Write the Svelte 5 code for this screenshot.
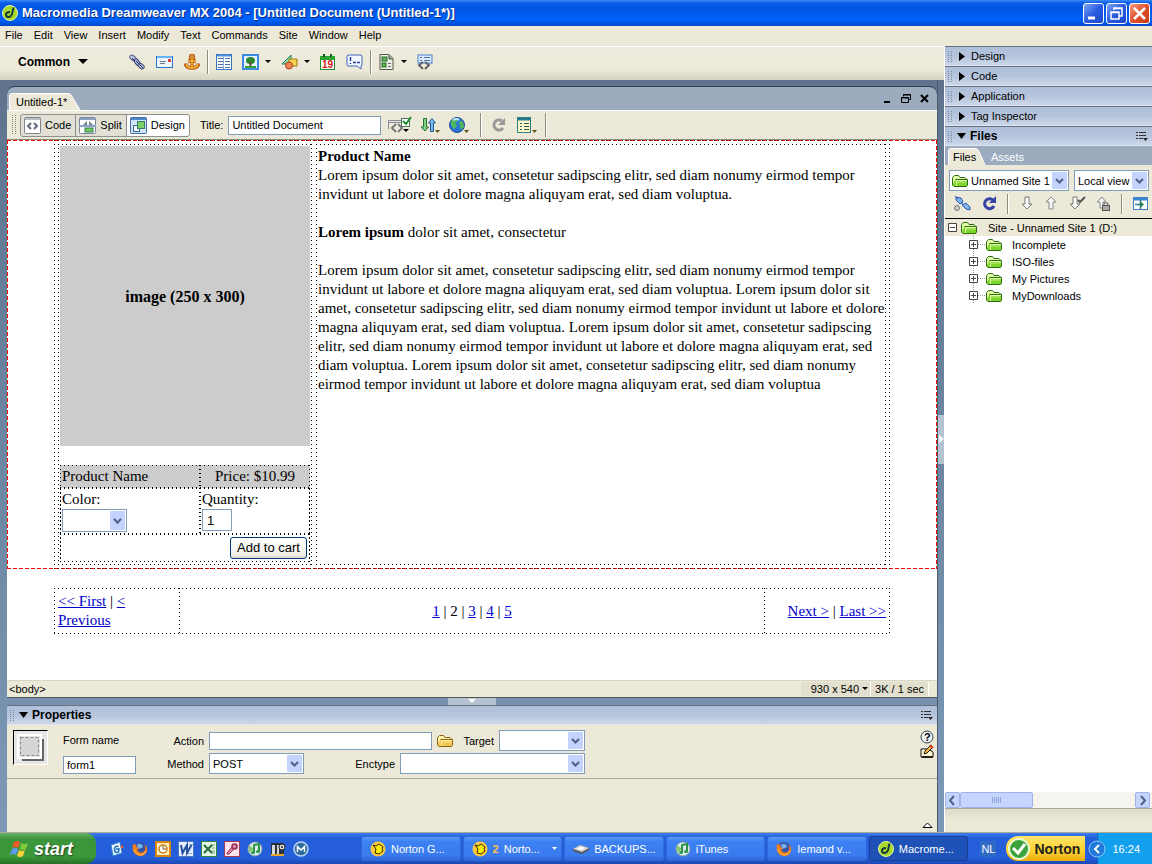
<script lang="ts">
	let docTitle = $state('Untitled Document');
	let formName = $state('form1');
	let action = $state('');
	let quantity = $state('1');
	let view = $state('Design');

	const menus = ['File', 'Edit', 'View', 'Insert', 'Modify', 'Text', 'Commands', 'Site', 'Window', 'Help'];
	const panels = ['Design', 'Code', 'Application', 'Tag Inspector'];
	const views = ['Code', 'Split', 'Design'];
	const folders = ['Incomplete', 'ISO-files', 'My Pictures', 'MyDownloads'];
	const quickLaunch = ['desktop', 'firefox', 'outlook', 'word', 'excel', 'access', 'itunes', 'video', 'mx'];
	const tasks = [
		{ icon: 'norton', label: 'Norton G...' },
		{ icon: 'norton', label: 'Norto...', count: 2 },
		{ icon: 'drive', label: 'BACKUPS...' },
		{ icon: 'itunes', label: 'iTunes' },
		{ icon: 'firefox', label: 'Iemand v...' },
		{ icon: 'dreamweaver', label: 'Macrome...', active: true }
	];
</script>

{#snippet caret()}
	<svg class="caret" width="6" height="4" viewBox="0 0 6 4"><path d="M0 0h6L3 3z" fill="#000" /></svg>
{/snippet}

{#snippet chevron()}
	<svg class="chevron" viewBox="0 0 15 17" preserveAspectRatio="none">
		<rect width="15" height="17" rx="1" fill="#c3d3fd" />
		<path d="M4 7l3.500 3.500L11 7" fill="none" stroke="#4d6185" stroke-width="2" />
	</svg>
{/snippet}

{#snippet grip()}
	<svg class="grip" width="5" height="11" viewBox="0 0 5 11">
		<path d="M.5 0v11M3.500 0v11" stroke="#7d8798" stroke-dasharray="1 1" />
	</svg>
{/snippet}

{#snippet optionsMenu()}
	<svg width="12" height="10" viewBox="0 0 12 10">
		<path d="M0 1.500h2M0 4.500h2M0 7.500h2M3 1.500h7M3 4.500h7M3 7.500h4" stroke="#333" />
		<path d="M7 7h5L9.500 10z" fill="#222" />
	</svg>
{/snippet}

{#snippet folder(fill, edge, shine)}
	<svg width="17" height="14" viewBox="0 0 17 14">
		<path d="M.5 11V3.500l2-2h4l1.500 2h5l1 1V7" fill={shine} stroke={edge} />
		<path d="M3.500 5.500h12V11l-1 1.500H2L.5 11" fill={fill} stroke={edge} />
		<path d="M4.500 12V6.500H15" fill="none" stroke={shine} />
		<path d="M5 8h9.500" stroke={shine} stroke-opacity=".3" stroke-width="2" />
	</svg>
{/snippet}

{#snippet appIcon(name)}
	<svg width="16" height="16" viewBox="0 0 16 16">
		{#if name === 'desktop'}
			<path d="M2 4l9-3 2 11-9 3z" fill="#eaf5ff" stroke="#2e84cb" />
			<path d="M9.500 5.500q-4-1-4 3t4 2.500L10 8H7" fill="none" stroke="#176fbd" stroke-width="1.500" />
			<path d="M12 4l3 2-3 2z" fill="#f2562a" />
		{:else if name === 'firefox'}
			<circle cx="8" cy="8" r="7" fill="#3455a9" />
			<path d="M6 3q4-1 5 3L7 8 5 5z" fill="#72b6ed" />
			<path d="M1 3q2 1 3 0 0 4 3 4-3 2 0 4 4 2 6-2 1-3-1-6 4 3 3 7-2 6-8 5Q-1 13 1 3z" fill="#f47a1d" />
			<path d="M2 8q1 5 6 6 4 0 6-4" fill="none" stroke="#ffc643" />
		{:else if name === 'outlook'}
			<rect x="1" y="1" width="14" height="14" fill="#fff0bd" stroke="#d9860e" stroke-width="2" />
			<circle cx="8" cy="8" r="4" fill="#fff" stroke="#cb7d13" stroke-width="1.500" />
			<path d="M8 5v3h3" fill="none" stroke="#8e5710" />
		{:else if name === 'word'}
			<rect x=".5" y=".5" width="15" height="15" fill="#e5efff" stroke="#4e78bd" />
			<path d="M9 12.500h5M11 3.500h4" stroke="#8dafd8" />
			<path d="M3 4l1.500 8L9 4v8l4.500-8" fill="none" stroke="#25529e" stroke-width="2" />
		{:else if name === 'excel'}
			<rect x=".5" y=".5" width="15" height="15" fill="#e6f5e6" stroke="#308541" />
			<path d="M10 4h4M11 7h3M11 10h3M10 12h4" stroke="#77af7c" />
			<path d="M3 4l8 8M11 4l-8 8" stroke="#236e35" stroke-width="2" />
		{:else if name === 'access'}
			<rect x=".5" y=".5" width="15" height="15" fill="#fae3eb" stroke="#a23b5c" />
			<path d="M8 6l-5 6v1h2l5-5" fill="#d8889f" stroke="#9c2e51" />
			<circle cx="10.500" cy="5.500" r="2.500" fill="#d8889f" stroke="#9c2e51" stroke-width="1.500" />
		{:else if name === 'itunes'}
			<circle cx="8" cy="8" r="7" fill="#dae9ed" stroke="#829eab" />
			<path d="M2 4l5 4-5 4z" fill="#87c46f" />
			<path d="M7 11V4l5-1v7" fill="none" stroke="#299346" stroke-width="2" />
			<ellipse cx="6" cy="11.500" rx="2" ry="1.500" fill="#299346" />
			<ellipse cx="11" cy="10.500" rx="2" ry="1.500" fill="#299346" />
		{:else if name === 'video'}
			<rect x="1" y="2" width="13" height="12" fill="#27313f" />
			<path d="M2 4h3v9H2zM7 4h2v9H7z" fill="#d4d6d8" />
			<circle cx="12" cy="6" r="3" fill="#dedede" stroke="#222" />
			<circle cx="12" cy="6" r="1" fill="#222" />
			<path d="M1 14h13" stroke="#eba72c" stroke-width="2" />
		{:else if name === 'mx'}
			<circle cx="8" cy="8" r="7" fill="#2f6c9e" stroke="#b9d6ec" stroke-width="1.500" />
			<path d="M4.500 11V5.500L8 9l3.500-3.500V11" fill="none" stroke="#fff" stroke-width="1.500" />
		{:else if name === 'norton'}
			<circle cx="8" cy="8" r="7.500" fill="#ffc93b" />
			<path d="M3 4l3 1 3-2 4 3-1 2 1 2-4 3-4-1 1-4z" fill="#ffee00" stroke="#302900" stroke-linejoin="round" />
		{:else if name === 'drive'}
			<path d="M0 8l7-4 9 3v2l-7 4-9-3z" fill="#555" />
			<path d="M0 8l7-4 9 3-7 4z" fill="#d4d4d4" />
			<path d="M4 7.500l4-2 4 1.500-4 2z" fill="#fff" />
		{:else}
			<circle cx="8" cy="8" r="7.500" fill="#a8d82a" stroke="#e1f69d" />
			<path d="M11.500 2.500L10 9q-1 3-3.500 3T4 9.500 8 7" fill="none" stroke="#173a3a" stroke-width="2" />
		{/if}
	</svg>
{/snippet}

<div class="app">
	<header class="titlebar">
		{@render appIcon('dreamweaver')}
		<h1>Macromedia Dreamweaver MX 2004 - [Untitled Document (Untitled-1*)]</h1>
		<div class="window-buttons">
			<button aria-label="Minimize"><svg viewBox="0 0 19 19"><path d="M4 14h7" stroke="#fff" stroke-width="3" /></svg></button>
			<button aria-label="Restore"><svg viewBox="0 0 19 19"><path d="M7 6V4h8v8h-3M4 8h8v7H4zM4 8.500h8M7 4.500h8" fill="none" stroke="#fff" stroke-width="1.500" /></svg></button>
			<button class="close" aria-label="Close"><svg viewBox="0 0 19 19"><path d="M4 4l11 11M15 4L4 15" stroke="#fff" stroke-width="2.500" /></svg></button>
		</div>
	</header>

	<nav class="menubar">
		{#each menus as menu}
			<button>{menu}</button>
		{/each}
	</nav>

	<div class="main">
		<div class="left">
			<div class="insert-bar">
				<button class="category">Common <svg width="10" height="6" viewBox="0 0 10 6"><path d="M0 0h10L5 5z" /></svg></button>
				<div class="tools links">
					<button aria-label="Hyperlink">
						<svg width="16" height="16" viewBox="0 0 16 16" fill="none">
							<rect x="-3.500" y="-2" width="7" height="4" rx="2" transform="translate(4 4) rotate(40)" fill="#c7d0ee" stroke="#4d5b86" />
							<rect x="-3.500" y="-2" width="7" height="4" rx="2" transform="translate(12 12) rotate(40)" fill="#c7d0ee" stroke="#38466f" />
							<rect x="-3.500" y="-2" width="7" height="4" rx="2" transform="translate(8 8) rotate(55)" fill="#aab6e0" stroke="#38466f" />
							<path d="M3 4l3 3M7 7l3 3M11 11l3 3" stroke="#26315a" />
						</svg>
					</button>
					<button aria-label="Email link">
						<svg width="17" height="16" viewBox="0 0 17 16"><rect x=".5" y="2.500" width="16" height="11" fill="#edf5ff" stroke="#2876d2" /><path d="M1 3h15" stroke="#65b3f1" stroke-width="2" /><path d="M4 7.500h6M4 9.500h5" stroke="#6c788c" /><path d="M12 5h3v3h-3z" fill="#d9432b" /></svg>
					</button>
					<button aria-label="Named anchor">
						<svg width="16" height="16" viewBox="0 0 16 16" fill="none"><path d="M8 5v9M4 7h8M1.500 9.500Q2 14 8 14t6.500-4.500" stroke="#b4520c" stroke-width="3.500" /><circle cx="8" cy="3" r="2" stroke="#b4520c" stroke-width="2.500" /><circle cx="8" cy="3" r="2" stroke="#f5a436" /><path d="M8 5v9M4 7h8M2 10q1 4 6 4t6-4" stroke="#ffb53c" stroke-width="1.500" /></svg>
					</button>
				</div>
				<span class="sep"></span>
				<div class="tools">
					<button aria-label="Table">
						<svg width="16" height="16" viewBox="0 0 16 16"><rect x=".5" y=".5" width="15" height="15" fill="#fff" stroke="#3273c2" /><path d="M1 1.500h14" stroke="#4d8ed9" stroke-width="2" /><path d="M2 4.500h5M9 4.500h5M2 7.500h5M9 7.500h5M2 10.500h5M9 10.500h5M2 13.500h5M9 13.500h5" stroke="#4a6fa5" /><path d="M7.500 3v12" stroke="#8daed4" /></svg>
					</button>
					<button aria-label="Image">
						<svg width="17" height="16" viewBox="0 0 17 16"><rect x="1" y="1" width="15" height="14" fill="#e4f3ff" stroke="#3c8be0" stroke-width="2" /><ellipse cx="8.500" cy="6.500" rx="4.500" ry="3.500" fill="#2b872c" /><path d="M7.500 8h2v4h-2z" fill="#674326" /><path d="M3 12h11v2H3z" fill="#36a035" /></svg>
						{@render caret()}
					</button>
					<button aria-label="Media">
						<svg width="17" height="16" viewBox="0 0 17 16"><path d="M1 10L10 1v9z" fill="#8fdcae" stroke="#247a60" /><path d="M8 5h8v7H8z" fill="#f6d252" stroke="#9a7b16" /><circle cx="8" cy="11.500" r="3.500" fill="#f08351" stroke="#aa401f" /></svg>
						{@render caret()}
					</button>
					<button aria-label="Date">
						<svg width="16" height="16" viewBox="0 0 16 16"><rect x=".5" y="2.500" width="14" height="13" fill="#fff" stroke="#218a31" /><path d="M0 2h15v4H0z" fill="#28a52f" /><path d="M4 0v3M11 0v3" stroke="#155b1c" stroke-width="2" /><text x="2" y="14" font-size="10" font-weight="bold" fill="#d21515">19</text></svg>
					</button>
					<button aria-label="Comment">
						<svg width="17" height="16" viewBox="0 0 17 16"><path d="M2 1h13l1 1v9l-1 1v3l-4-3H2l-1-1V2z" fill="#f4f8ff" stroke="#4164b8" /><path d="M4.500 3v4M4.500 9v1M7 8.500h3M11 8.500h3" stroke="#223e9c" stroke-width="1.500" /></svg>
					</button>
				</div>
				<span class="sep"></span>
				<div class="tools">
					<button aria-label="Templates">
						<svg width="16" height="16" viewBox="0 0 16 16"><path d="M1 .5h9l4 4v11H1z" fill="#eef1e6" stroke="#50594b" /><path d="M10 1v4h4" fill="#9ba299" stroke="#50594b" /><rect x="3" y="3" width="5" height="4" fill="#64b451" stroke="#236c2e" /><rect x="3" y="9" width="4" height="4" fill="#64b451" stroke="#236c2e" /><path d="M9 9.500h3M9 12.500h3" stroke="#667" /></svg>
						{@render caret()}
					</button>
					<button aria-label="Tag chooser">
						<svg width="16" height="16" viewBox="0 0 16 16"><rect x="1" y="1" width="14" height="8" fill="#dcecff" stroke="#4a7ec7" /><path d="M3 3.500h2M7 3.500h6M3 6.500h2M7 6.500h6" stroke="#56759c" /><path d="M6 8l-4 3 4 4M8 8l4 3-4 4" fill="none" stroke="#5f6265" stroke-width="2" /></svg>
					</button>
				</div>
			</div>

			<div class="workspace">
				<div class="stack">
					<section class="document">
						<div class="doc-head">
							<svg class="tab" width="72" height="17" viewBox="0 0 72 17"><path d="M.5 17V3Q.5.500 3 .5h56q3 0 4 3L71 17" fill="#ece9d8" stroke="#fff" /><text x="7" y="13">Untitled-1*</text></svg>
							<div class="doc-buttons">
								<button aria-label="Minimize document"><svg width="9" height="9" viewBox="0 0 9 9"><path d="M1 8h6" stroke="#000" stroke-width="2" /></svg></button>
								<button aria-label="Restore document"><svg width="10" height="9" viewBox="0 0 10 9"><path d="M2.500 2.500V.5h7v5h-2M.5 3.500h7v5h-7zM.5 4h7M2 1h7" fill="none" stroke="#000" /></svg></button>
								<button aria-label="Close document"><svg width="9" height="9" viewBox="0 0 9 9"><path d="M1 1l7 7M8 1L1 8" stroke="#000" stroke-width="2" /></svg></button>
							</div>
						</div>

						<div class="doc-toolbar">
							<svg width="5" height="20" viewBox="0 0 5 20"><path d="M.5 0v20M3.500 0v20" stroke="#8d8a7b" stroke-dasharray="1 1" /></svg>
							<div class="views">
								{#each views as name}
									<button class:selected={view === name} onclick={() => (view = name)}>
										<svg width="17" height="17" viewBox="0 0 17 17">
											<rect x=".5" y=".5" width="16" height="16" rx="1" fill="#fff" stroke="#7c8591" />
											{#if name === 'Code'}
												<path d="M1 2h15" stroke="#b8bec8" stroke-width="2" />
												<path d="M7 6L4 9l3 3M10 6l3 3-3 3" fill="none" stroke="#606b78" stroke-width="2" />
											{:else if name === 'Split'}
												<path d="M1 2h15M0 9h17" stroke="#8aa3c8" stroke-width="2" />
												<path d="M8 4L4 8h4zM10 4l4 4h-4z" fill="#747e8b" />
												<rect x="6" y="11" width="8" height="4" fill="#73cb5c" stroke="#2f7e5b" />
											{:else}
												<rect x=".5" y=".5" width="16" height="16" rx="1" fill="#cfe3f9" stroke="#3e6ca7" />
												<path d="M1 2h15" stroke="#4f86c8" stroke-width="2" />
												<rect x="3.500" y="8.500" width="6" height="6" fill="#eff6ff" stroke="#366c92" />
												<rect x="7.500" y="4.500" width="7" height="7" fill="#7bd06b" stroke="#357d64" />
											{/if}
										</svg>
										{name}
									</button>
								{/each}
							</div>
							<label for="doc-title">Title:</label>
							<input id="doc-title" bind:value={docTitle} />
							<div class="doc-tools">
								<button aria-label="Check browser support"><svg width="24" height="18" viewBox="0 0 24 18"><path d="M.5 13V4.500H14M0 6.500h13" fill="none" stroke="#858b98" /><path d="M8 8l-4 4 4 4M10 8l4 4-4 4" fill="none" stroke="#777b81" stroke-width="2" /><rect x="13.500" y="2.500" width="8" height="8" fill="#fff" stroke="#51705a" /><path d="M15 5l3 3 5-7" fill="none" stroke="#1b8f32" stroke-width="2" /><path d="M15 13h6l-3 3z" /></svg></button>
								<button aria-label="File management"><svg width="21" height="17" viewBox="0 0 21 17"><path d="M3.500 1.500h3V10h2l-3.500 4L1 10h2.500z" fill="#80d080" stroke="#277438" /><path d="M10.500 14.500V6H8.500L12 1.500 15.500 6h-2v8.500z" fill="#75b7ef" stroke="#275992" /><path d="M15 13h5l-2.500 3z" fill="#5b5417" /></svg></button>
								<button aria-label="Preview in browser"><svg width="21" height="17" viewBox="0 0 21 17"><circle cx="8" cy="8" r="7.500" fill="#2b76d5" stroke="#214b93" /><path d="M2 4q4-4 7-2l-1 3-2 1 2 3-3 3-3-4zM10 4l4 1 1 5-3 3-1-4z" fill="#50b957" /><path d="M4 3q4-2 6 0" fill="none" stroke="#b9e6ff" stroke-width="2" /><path d="M15 13h5l-2.500 3z" fill="#5b5417" /></svg></button>
							</div>
							<span class="sep"></span>
							<button aria-label="Refresh"><svg width="14" height="16" viewBox="0 0 14 16"><path d="M11 4A5 5 0 1 0 12 11" fill="none" stroke="#99999b" stroke-width="3" /><path d="M14 1v7H7z" fill="#99999b" /></svg></button>
							<button class="view-options" aria-label="View options"><svg width="20" height="17" viewBox="0 0 20 17"><rect x=".5" y=".5" width="13" height="15" fill="#fff6c9" stroke="#2f8186" /><path d="M0 2h14" stroke="#267d85" stroke-width="3" /><path d="M3 6.500h2M7 6.500h5M3 9.500h2M7 9.500h5M3 12.500h2M7 12.500h5" stroke="#35584f" /><path d="M15 13h5l-2.500 3z" fill="#5b5417" /></svg></button>
							<span class="sep"></span>
						</div>

						<div class="canvas">
							<form class="product-form dotted" onsubmit={(e) => e.preventDefault()}>
								<div class="layout dotted">
									<div class="product dotted">
										<div class="picture">image (250 x 300)</div>
										<table class="order dotted">
											<tbody>
												<tr class="summary">
													<td class="dotted">Product Name</td>
													<td class="dotted price">Price: $10.99</td>
												</tr>
												<tr class="fields">
													<td class="dotted">
														<label for="color">Color:</label>
														<span class="select color">
															<select id="color"><option></option></select>
															{@render chevron()}
														</span>
													</td>
													<td class="dotted">
														<label for="quantity">Quantity:</label>
														<input id="quantity" bind:value={quantity} />
													</td>
												</tr>
												<tr>
													<td class="dotted cart" colspan="2"><button type="submit">Add to cart</button></td>
												</tr>
											</tbody>
										</table>
									</div>
									<div class="description dotted">
										<p>
											<b>Product Name</b><br />
											Lorem ipsum dolor sit amet, consetetur sadipscing elitr, sed diam nonumy eirmod tempor<br />
											invidunt ut labore et dolore magna aliquyam erat, sed diam voluptua.
										</p>
										<p><b>Lorem ipsum</b> dolor sit amet, consectetur</p>
										<p>
											Lorem ipsum dolor sit amet, consetetur sadipscing elitr, sed diam nonumy eirmod tempor<br />
											invidunt ut labore et dolore magna aliquyam erat, sed diam voluptua. Lorem ipsum dolor sit<br />
											amet, consetetur sadipscing elitr, sed diam nonumy eirmod tempor invidunt ut labore et dolore<br />
											magna aliquyam erat, sed diam voluptua. Lorem ipsum dolor sit amet, consetetur sadipscing<br />
											elitr, sed diam nonumy eirmod tempor invidunt ut labore et dolore magna aliquyam erat, sed<br />
											diam voluptua. Lorem ipsum dolor sit amet, consetetur sadipscing elitr, sed diam nonumy<br />
											eirmod tempor invidunt ut labore et dolore magna aliquyam erat, sed diam voluptua
										</p>
									</div>
								</div>
							</form>

							<div class="pagination dotted">
								<div><a href="#first">&lt;&lt; First</a> | <a href="#previous">&lt; Previous</a></div>
								<div class="pages"><a href="#1">1</a> | 2 | <a href="#3">3</a> | <a href="#4">4</a> | <a href="#5">5</a></div>
								<div class="next"><a href="#next">Next &gt;</a> | <a href="#last">Last &gt;&gt;</a></div>
							</div>
						</div>

						<footer class="statusbar">
							<span>&lt;body&gt;</span>
							<div class="stats">
								<button>930 x 540 {@render caret()}</button>
								<span>3K / 1 sec</span>
							</div>
						</footer>
					</section>

					<div class="splitter">
						<button aria-label="Collapse properties"><svg width="10" height="5" viewBox="0 0 10 5"><path d="M1 0h8L5 4z" fill="#fff" /></svg></button>
					</div>

					<section class="properties">
						<header class="panel-head open">
							{@render grip()}
							<svg width="9" height="6" viewBox="0 0 9 6"><path d="M0 0h9L4.500 6z" /></svg>
							<h2>Properties</h2>
							{@render optionsMenu()}
						</header>
						<div class="props-body">
							<div class="form-icon">
								<svg width="33" height="33" viewBox="0 0 33 33"><path d="M8 8h22v22H8z" fill="#666" /><rect x="4" y="4" width="23" height="23" fill="#e4e4e4" stroke="#fff" stroke-width="2" /><rect x="6.500" y="6.500" width="18" height="18" fill="#d6d6d6" stroke="#888" stroke-dasharray="3 2" /></svg>
							</div>
							<div class="form-name">
								<label for="form-name">Form name</label>
								<input id="form-name" bind:value={formName} />
							</div>
							<div class="attributes">
								<div class="attr-row">
									<label class="lead" for="action">Action</label>
									<input id="action" bind:value={action} />
									<button aria-label="Browse for file">{@render folder('#f0c750', '#8b6412', '#fff0a8')}</button>
									<label for="target">Target</label>
									<span class="select target">
										<select id="target"><option></option></select>
										{@render chevron()}
									</span>
								</div>
								<div class="attr-row">
									<label class="lead" for="method">Method</label>
									<span class="select method">
										<select id="method"><option>POST</option><option>GET</option></select>
										{@render chevron()}
									</span>
									<label class="enctype-label" for="enctype">Enctype</label>
									<span class="select enctype">
										<select id="enctype"><option></option></select>
										{@render chevron()}
									</span>
								</div>
							</div>
							<div class="help">
								<button aria-label="Help"><svg width="14" height="14" viewBox="0 0 14 14"><circle cx="7" cy="7" r="6" fill="#eef3f3" stroke="#38424c" /><text x="4" y="11" font-size="11" font-weight="bold">?</text></svg></button>
								<button aria-label="Quick tag editor"><svg width="14" height="14" viewBox="0 0 14 14"><path d="M1 5h7l5 3v5H1z" fill="#fff8cf" stroke="#111" /><path d="M4 10l1-3 6-6 2 2-6 6z" fill="#f0b33c" stroke="#222" /><path d="M10 1l3 3" stroke="#d23a2a" stroke-width="2" /><path d="M2 13h11" stroke="#222" stroke-width="2" /></svg></button>
							</div>
						</div>
						<div class="props-foot">
							<button aria-label="Collapse"><svg width="11" height="6" viewBox="0 0 11 6"><path d="M1 5.500L5.500 1 10 5.500z" fill="#fff" stroke="#000" /></svg></button>
						</div>
					</section>
				</div>
				<div class="divider">
					<button aria-label="Collapse panels"><svg width="5" height="8" viewBox="0 0 5 8"><path d="M0 0v8l5-4z" fill="#fff" /></svg></button>
				</div>
			</div>
		</div>

		<aside class="panels">
			{#each panels as panel}
				<button class="panel-head">
					{@render grip()}
					<svg width="6" height="9" viewBox="0 0 6 9"><path d="M0 0v9l6-4.500z" /></svg>
					{panel}
				</button>
			{/each}
			<header class="panel-head open">
				{@render grip()}
				<svg width="9" height="6" viewBox="0 0 9 6"><path d="M0 0h9L4.500 6z" /></svg>
				<h2>Files</h2>
				{@render optionsMenu()}
			</header>

			<div class="file-tabs">
				<svg width="38" height="17" viewBox="0 0 38 17"><path d="M.5 17V3Q.5.500 3 .5h24q3 0 4 3L37 17" fill="#ece9d8" stroke="#fff" /><text x="5" y="13">Files</text></svg>
				<button>Assets</button>
			</div>

			<div class="site-row">
				<span class="select site">
					<span class="site-icon">{@render folder('#7ed62d', '#2c6b12', '#e2ffa8')}</span>
					<select aria-label="Site"><option>Unnamed Site 1</option></select>
					{@render chevron()}
				</span>
				<span class="select view">
					<select aria-label="View"><option>Local view</option></select>
					{@render chevron()}
				</span>
			</div>

			<div class="file-tools">
				<button aria-label="Connect"><svg width="18" height="17" viewBox="0 0 18 17"><circle cx="4" cy="13" r="2.500" fill="#ccc" stroke="#777" /><path d="M3 2l5 1 2 4-3 2-4-4zM9 10l4-2 4 4v3l-4-1z" fill="#7eb4f2" stroke="#2d5bb0" /><path d="M2 1l3 3M8 8l3 2" stroke="#2d5bb0" /></svg></button>
				<button aria-label="Refresh files"><svg width="15" height="15" viewBox="0 0 15 15"><path d="M11 4A5 5 0 1 0 12 10" fill="none" stroke="#3443a5" stroke-width="3" /><path d="M14 0v7H7z" fill="#3443a5" /></svg></button>
				<span class="sep"></span>
				<button aria-label="Get files"><svg width="14" height="15" viewBox="0 0 14 15"><path d="M5 1h4v7h3l-5 5-5-5h3z" fill="#fff" stroke="#777" /></svg></button>
				<button aria-label="Put files"><svg width="14" height="15" viewBox="0 0 14 15"><path d="M5 13h4V6h3L7 1 2 6h3z" fill="#f5f5f5" stroke="#888" /></svg></button>
				<button aria-label="Check out"><svg width="17" height="15" viewBox="0 0 17 15"><path d="M4 1h4v7h3l-5 5-5-5h3z" fill="#fff" stroke="#777" /><path d="M9 4l2 2 5-5" fill="none" stroke="#555" stroke-width="2" /></svg></button>
				<button aria-label="Check in"><svg width="14" height="15" viewBox="0 0 14 15"><path d="M4 12h3V6h3L6 1 1 6h3z" fill="#f5f5f5" stroke="#888" /><rect x="6.500" y="9.500" width="7" height="5" fill="#aaa" stroke="#555" /><path d="M8 9V7h4v2" fill="none" stroke="#666" /></svg></button>
				<span class="sep"></span>
				<button aria-label="Expand"><svg width="15" height="13" viewBox="0 0 15 13"><rect x=".5" y=".5" width="14" height="12" fill="#fff" stroke="#3e7fc0" /><path d="M0 2h15" stroke="#3989d2" stroke-width="3" /><path d="M7.500 3v10M2 7.500h5" stroke="#2d799b" stroke-width="1.500" /><path d="M7 4v7l4-3.500z" fill="#25814f" /></svg></button>
			</div>

			<ul class="tree">
				<li class="root">
					<button class="toggle" aria-label="Collapse site"><svg width="9" height="9" viewBox="0 0 9 9"><path d="M.5.500h8v8h-8zM2 4.500h5" fill="#fff" stroke="#444" /></svg></button>
					{@render folder('#7ed62d', '#2c6b12', '#e2ffa8')}
					<span>Site - Unnamed Site 1 (D:)</span>
				</li>
				{#each folders as name}
					<li>
						<button class="toggle" aria-label="Expand {name}"><svg width="17" height="17" viewBox="0 0 17 17"><path d="M4.500 0v4M4.500 13v4M9 8.500h8" stroke="#999" stroke-dasharray="1 1" /><path d="M.5 4.500h8v8h-8zM2 8.500h5M4.500 6v5" fill="#fff" stroke="#444" /></svg></button>
						{@render folder('#7ed62d', '#2c6b12', '#e2ffa8')}
						<span>{name}</span>
					</li>
				{/each}
			</ul>

			<div class="scrollbar">
				<button aria-label="Scroll left"><svg width="13" height="15" viewBox="0 0 13 15"><path d="M8 3L4 7.500 8 12" fill="none" stroke="#4d6185" stroke-width="2" /></svg></button>
				<div class="thumb"><svg width="9" height="6" viewBox="0 0 9 6"><path d="M.5 0v6M2.500 0v6M4.500 0v6M6.500 0v6M8.500 0v6" stroke="#8ea7e0" /></svg></div>
				<button aria-label="Scroll right"><svg width="13" height="15" viewBox="0 0 13 15"><path d="M5 3l4 4.500L5 12" fill="none" stroke="#4d6185" stroke-width="2" /></svg></button>
			</div>
			<div class="panels-foot"></div>
		</aside>
	</div>

	<footer class="taskbar">
		<button class="start">
			<svg width="20" height="19" viewBox="0 0 20 19"><path d="M4 3q3-2 6 0L8 9q-3-2-6 0z" fill="#f0592b" /><path d="M11 4q3 2 7 0l-2 6q-3 2-6 0z" fill="#82ca3c" /><path d="M2 10q3-2 6 0l-2 6q-3-2-6 0z" fill="#5c9df2" /><path d="M9 11q3 2 6 0l-2 6q-3 2-6 0z" fill="#fbcf3a" /></svg>
			start
		</button>
		<div class="quick">
			{#each quickLaunch as name}
				<button aria-label={name}>{@render appIcon(name)}</button>
			{/each}
		</div>
		<div class="tasks">
			{#each tasks as task}
				<button class:active={task.active}>
					{@render appIcon(task.icon)}
					{#if task.count}<b>{task.count}</b>{/if}
					<span>{task.label}</span>
					{#if task.count}<svg class="more" width="5" height="3" viewBox="0 0 5 3"><path d="M0 0h5L2.500 3z" fill="#fff" /></svg>{/if}
				</button>
			{/each}
		</div>
		<span class="lang">NL</span>
		<button class="norton">
			<svg width="22" height="22" viewBox="0 0 22 22"><circle cx="11" cy="11" r="10" fill="#3da23b" stroke="#e8f7d0" stroke-width="2" /><path d="M5 10l5 5 7-9" fill="none" stroke="#fff" stroke-width="3" /></svg>
			Norton
		</button>
		<div class="tray">
			<button aria-label="Show hidden icons"><svg width="18" height="18" viewBox="0 0 18 18"><circle cx="9" cy="9" r="8" fill="#2179dc" stroke="#86c8f5" /><path d="M11 5L7 9l4 4" fill="none" stroke="#fff" stroke-width="2" /></svg></button>
			<time>16:24</time>
		</div>
	</footer>
</div>

<style>
	:global(body) {
		margin: 0;
	}

	.app {
		display: flex;
		flex-direction: column;
		min-height: 100vh;
		background: #ece9d8;
		color: #000;
		font: 11px/14px 'Liberation Sans', Arial, sans-serif;
	}

	.app * {
		box-sizing: border-box;
	}

	svg {
		display: block;
		flex: none;
	}

	svg text {
		font-family: 'Liberation Sans', Arial, sans-serif;
	}

	button {
		display: flex;
		align-items: center;
		flex: none;
		padding: 0;
		border: 0;
		background: none;
		color: inherit;
		font: inherit;
	}

	h1,
	h2,
	p {
		margin: 0;
	}

	input,
	select {
		min-width: 0;
		margin: 0;
		border: 1px solid #7f9db9;
		border-radius: 0;
		background: #fff;
		color: #000;
		font: inherit;
	}

	input {
		padding: 0 3px;
	}

	.select {
		display: inline-grid;
		height: 21px;
	}

	.select select,
	.select .chevron {
		grid-area: 1 / 1;
	}

	.select select {
		width: 100%;
		height: 100%;
		padding: 0 16px 0 3px;
		appearance: none;
	}

	.chevron {
		width: 15px;
		height: calc(100% - 4px);
		margin: 2px;
		justify-self: end;
		pointer-events: none;
	}

	.sep {
		flex: none;
		width: 2px;
		height: 24px;
		border-left: 1px solid #8f8c7e;
		border-right: 1px solid #fff;
	}

	/* title and menus */
	.titlebar {
		display: flex;
		align-items: center;
		gap: 4px;
		height: 26px;
		padding: 0 2px;
		background: linear-gradient(#3b8cf8 0, #0a5be8 3px, #0054e3 8px, #0062fb 20px, #0046c8 26px);
		color: #fff;
	}

	.titlebar h1 {
		flex: 1;
		font: bold 13px/18px 'Liberation Sans', Arial, sans-serif;
		text-shadow: 1px 1px #0a2a80;
		white-space: nowrap;
	}

	.window-buttons {
		display: flex;
		gap: 2px;
	}

	.window-buttons button {
		width: 21px;
		height: 21px;
		border: 1px solid #fff;
		border-radius: 3px;
		background: linear-gradient(135deg, #7fa5f5, #2a5be0 50%, #1c49c8);
	}

	.window-buttons .close {
		background: linear-gradient(135deg, #f0a088, #e0522c 50%, #c33c14);
	}

	.menubar {
		display: flex;
		align-items: center;
		gap: 11px;
		height: 20px;
		padding: 0 5px 2px;
	}

	.main {
		flex: 1;
		display: grid;
		grid-template-columns: minmax(0, 1fr) 208px;
	}

	.left {
		display: flex;
		flex-direction: column;
	}

	.insert-bar {
		display: flex;
		align-items: center;
		gap: 7px;
		height: 34px;
		padding: 0 18px 3px;
		border-top: 1px solid #fff;
		background: linear-gradient(#efecdf, #ece9d8 70%, #d6d2c2);
	}

	.category {
		gap: 8px;
		width: 104px;
		font-size: 12px;
		font-weight: bold;
	}

	.tools {
		display: flex;
		gap: 10px;
	}

	.tools.links {
		gap: 11px;
	}

	.tools button {
		gap: 6px;
	}

	/* document window */
	.workspace {
		flex: 1;
		display: flex;
		padding-left: 7px;
		background: linear-gradient(#5f738c, #7b99b6);
	}

	.stack {
		flex: 1;
		display: flex;
		flex-direction: column;
		min-width: 0;
		padding-top: 6px;
	}

	.document {
		flex: 1;
		display: flex;
		flex-direction: column;
	}

	.doc-head {
		display: flex;
		align-items: flex-end;
		justify-content: space-between;
		height: 24px;
		padding: 0 8px 0 2px;
		border-top: 1px solid #334050;
		border-radius: 8px 8px 0 0;
		background: #9dabbf;
	}

	.doc-buttons {
		display: flex;
		align-self: center;
		gap: 9px;
	}

	.doc-toolbar {
		display: flex;
		align-items: center;
		height: 30px;
		padding: 0 5px;
		border-top: 1px solid #fff;
		border-bottom: 1px solid #8f8c7e;
		background: #ece9d8;
	}

	.views {
		display: flex;
		height: 23px;
		margin: 0 10px 0 3px;
		border: 1px solid #8b8f8f;
		border-radius: 3px;
		background: #e2e0d4;
	}

	.views button {
		gap: 4px;
		padding: 0 4px 0 3px;
		border-right: 1px solid #8b8f8f;
	}

	.views button.selected {
		border: 0;
		border-radius: 0 3px 3px 0;
		background: #fff;
	}

	#doc-title {
		width: 153px;
		height: 19px;
		margin: 0 7px 0 5px;
	}

	.doc-tools {
		display: flex;
		gap: 8px;
		margin-right: 10px;
	}

	.doc-toolbar .sep + button {
		margin: 0 12px 0 9px;
	}

	.view-options {
		margin-right: 8px;
	}

	.canvas {
		flex: 1;
		background: #fff;
		font: 15px/19px 'Liberation Serif', 'Times New Roman', serif;
	}

	/* invisible-element outlines of the design view */
	.dotted {
		--across: repeating-linear-gradient(90deg, #000 0 1px, transparent 1px 4px);
		--down: repeating-linear-gradient(#000 0 1px, transparent 1px 4px);
		background-image: var(--across), var(--across), var(--down), var(--down);
		background-position: top, bottom, left, right;
		background-repeat: no-repeat;
		background-size: 100% 1px, 100% 1px, 1px 100%, 1px 100%;
	}

	.product-form {
		--across: repeating-linear-gradient(90deg, #f00 0 4px, transparent 4px 6px);
		--down: repeating-linear-gradient(#f00 0 4px, transparent 4px 6px);
		margin-bottom: 19px;
	}

	.layout {
		display: grid;
		grid-template-columns: 254px minmax(0, 1fr);
		gap: 4px;
		margin: 0 47px;
		padding: 4px;
	}

	.product {
		padding: 2px 2px 3px;
	}

	.picture {
		display: flex;
		align-items: center;
		justify-content: center;
		height: 300px;
		margin-bottom: 19px;
		background: #ccc;
		font-size: 16px;
		font-weight: bold;
	}

	.order {
		width: 100%;
		border-spacing: 0;
		table-layout: fixed;
	}

	.order td {
		padding: 2px;
		vertical-align: top;
	}

	.order td:first-child {
		width: 140px;
	}

	.summary {
		background: #ccc;
	}

	.order .price {
		text-align: center;
	}

	.fields label {
		display: block;
	}

	.select.color {
		display: grid;
		width: 65px;
		height: 23px;
	}

	#quantity {
		display: block;
		width: 30px;
		height: 22px;
		padding: 0 4px;
		font: 13px 'Liberation Sans', Arial, sans-serif;
	}

	.order .cart {
		padding: 3px;
	}

	.cart button {
		justify-content: center;
		width: 77px;
		height: 22px;
		margin-left: auto;
		border: 1px solid #003c74;
		border-radius: 3px;
		background: linear-gradient(#fff, #f0efe8 85%, #dad6ca);
		font: 13px/16px 'Liberation Sans', Arial, sans-serif;
	}

	.description {
		padding: 3px 0 3px 2px;
	}

	.description p + p {
		margin-top: 19px;
	}

	.pagination {
		display: grid;
		grid-template-columns: 15% 1fr 15%;
		align-items: center;
		margin: 0 47px;
	}

	.pagination > div {
		padding: 4px;
	}

	.pagination .pages {
		align-self: stretch;
		align-content: center;
		text-align: center;
		background-image: repeating-linear-gradient(#000 0 1px, transparent 1px 4px),
			repeating-linear-gradient(#000 0 1px, transparent 1px 4px);
		background-position: left, right;
		background-repeat: no-repeat;
		background-size: 1px 100%;
	}

	.pagination .next {
		text-align: right;
	}

	a {
		color: #00c;
	}

	.statusbar {
		display: flex;
		align-items: center;
		justify-content: space-between;
		height: 18px;
		padding: 0 8px 0 2px;
		border-top: 1px solid #d8d5c5;
		border-bottom: 1px solid #55575a;
		background: #ece9d8;
	}

	.stats {
		display: flex;
		gap: 2px;
		padding-left: 10px;
		background: #e2dfcf;
	}

	.stats button {
		gap: 3px;
	}

	.stats span {
		padding: 0 4px;
		border-left: 1px solid #fff;
		border-right: 1px solid #fff;
	}

	.splitter {
		display: flex;
		justify-content: center;
		height: 7px;
	}

	.splitter button,
	.divider button {
		justify-content: center;
		background: #b5c2d0;
	}

	.splitter button {
		width: 48px;
		height: 7px;
	}

	.divider {
		display: flex;
		align-items: center;
		width: 7px;
		padding-bottom: 34px;
		border-left: 1px solid #4a5b6e;
	}

	.divider button {
		width: 6px;
		height: 49px;
	}

	/* properties inspector */
	.properties {
		background: #ece9d8;
	}

	.panel-head {
		display: flex;
		align-items: center;
		gap: 6px;
		width: 100%;
		height: 20px;
		padding: 0 4px 0 3px;
		border-top: 1px solid #66707e;
		border-bottom: 1px solid #dfe6f2;
		background: linear-gradient(#b0c0da, #b5c4dc 50%, #ccd7e9);
	}

	.panel-head.open {
		gap: 4px;
	}

	.panel-head h2 {
		flex: 1;
		font-size: 12px;
		line-height: 14px;
	}

	.props-body {
		display: flex;
		height: 54px;
		padding: 5px 3px 0 6px;
		border-bottom: 1px solid #aca899;
	}

	.form-icon {
		width: 35px;
		height: 35px;
		border: 1px solid #000;
		border-right-color: #fff;
		border-bottom-color: #fff;
		background: #e6e6e6;
	}

	.form-name {
		display: flex;
		flex-direction: column;
		gap: 9px;
		width: 73px;
		padding-top: 3px;
		margin: 0 24px 0 15px;
	}

	.form-name input {
		height: 18px;
	}

	.attributes {
		display: flex;
		flex-direction: column;
		gap: 2px;
		width: 425px;
	}

	.attr-row {
		display: flex;
		align-items: center;
		gap: 5px;
		height: 21px;
	}

	.attr-row .lead {
		width: 44px;
		text-align: right;
	}

	#action {
		flex: 1;
		height: 18px;
	}

	.attr-row button {
		margin-right: 4px;
	}

	.select.target {
		width: 86px;
	}

	.select.method {
		width: 95px;
	}

	.enctype-label {
		margin-left: auto;
	}

	.select.enctype {
		width: 185px;
	}

	.help {
		margin-left: auto;
	}

	.props-foot {
		display: flex;
		align-items: flex-end;
		justify-content: flex-end;
		height: 53px;
		padding: 4px;
	}

	/* panel dock */
	.panels {
		display: flex;
		flex-direction: column;
		border-left: 1px solid #fff;
	}

	.file-tabs {
		display: flex;
		align-items: flex-end;
		gap: 5px;
		height: 19px;
		padding-left: 3px;
		background: #9dabbf;
		color: #fff;
	}

	.file-tabs text {
		fill: #000;
	}

	.file-tabs button {
		height: 17px;
	}

	.site-row {
		display: flex;
		gap: 5px;
		padding: 5px 3px 3px 4px;
	}

	.site {
		width: 120px;
	}

	.view {
		flex: 1;
	}

	.site-icon {
		z-index: 1;
		grid-area: 1 / 1;
		align-self: center;
		width: 17px;
		margin-left: 3px;
	}

	.select.site select {
		padding-left: 21px;
	}

	.file-tools {
		display: flex;
		align-items: center;
		justify-content: space-between;
		height: 25px;
		padding: 0 4px 5px 8px;
		border-bottom: 1px solid #000;
	}

	.file-tools .sep {
		height: 20px;
	}

	.tree {
		flex: 1;
		margin: 0;
		padding: 0;
		background: #fff;
		list-style: none;
	}

	.tree li {
		display: flex;
		align-items: center;
		height: 17px;
		padding-left: 24px;
	}

	.tree .root {
		gap: 4px;
		padding-left: 3px;
		background: #ece9d8;
	}

	.tree span {
		margin-left: 9px;
	}

	.tree .root span {
		margin-left: 6px;
	}

	.scrollbar {
		display: flex;
		height: 17px;
		padding: 0 2px 0 0;
		border-bottom: 1px solid #aca899;
		background: #f5f4ee;
	}

	.scrollbar button,
	.thumb {
		border: 1px solid #9eb5ea;
		border-radius: 2px;
		background: #c6d5fd;
	}

	.scrollbar button:last-child {
		margin-left: auto;
	}

	.thumb {
		display: flex;
		align-items: center;
		justify-content: center;
		width: 73px;
	}

	.panels-foot {
		height: 23px;
		background: linear-gradient(#dedaca, #ece9d8 50%, #ece9d8);
	}

	/* taskbar */
	.taskbar {
		display: flex;
		align-items: center;
		height: 32px;
		border-top: 1px solid #aca899;
		background: linear-gradient(#3a80f0, #245edb 5px, #245edb 25px, #1c48b4);
		color: #fff;
	}

	.start {
		gap: 4px;
		width: 96px;
		height: 31px;
		padding-left: 10px;
		border-radius: 0 10px 10px 0;
		background: linear-gradient(#68b168, #3b943a 20%, #3b9a3a 75%, #276f27);
		font-size: 18px;
		font-style: italic;
		font-weight: bold;
		line-height: 24px;
		text-shadow: 1px 1px 2px #1c401c;
	}

	.quick {
		display: flex;
		gap: 7px;
		padding: 0 52px 0 13px;
	}

	.tasks {
		flex: 1;
		display: flex;
		gap: 2px;
		min-width: 0;
	}

	.tasks button {
		flex: 1 1 0;
		gap: 5px;
		min-width: 0;
		height: 25px;
		padding: 0 4px 0 8px;
		border: 1px solid #3169d8;
		border-radius: 3px;
		background: linear-gradient(#5c98fa, #3c81f3 20%, #3a7bee 80%, #3069d8);
		white-space: nowrap;
	}

	.tasks button.active {
		background: #1e52b7;
		border-color: #173f94;
	}

	.tasks b {
		color: #ffc04c;
	}

	.more {
		margin-left: auto;
	}

	.lang {
		margin: 0 10px 0 12px;
		padding: 1px 1px;
		background: #316ac5;
	}

	.norton {
		gap: 4px;
		width: 79px;
		height: 25px;
		padding-left: 2px;
		border-radius: 12px 0 0 12px;
		background: linear-gradient(#ffe36a, #ffd22e 60%, #e8ab10);
		color: #222;
		font-size: 14px;
		font-weight: bold;
	}

	.tray {
		display: flex;
		align-items: center;
		gap: 6px;
		height: 31px;
		margin-left: 3px;
		padding-right: 12px;
		background: linear-gradient(90deg, transparent 9px, #0c59b9 9px, #12a0ee 11px);
	}

	@media (min-width: 1100px) {
		.description p {
			white-space: nowrap;
		}
	}
</style>
